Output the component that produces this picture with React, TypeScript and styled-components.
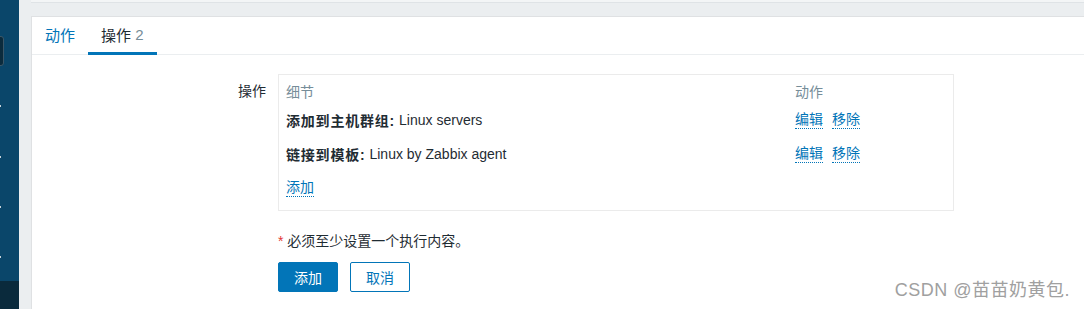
import { FC } from 'react';
import styled, { createGlobalStyle } from 'styled-components';

const GlobalStyle = createGlobalStyle`
  html, body {
    margin: 0;
    padding: 0;
    background: #ebeef0;
    overflow: hidden;
  }
  body {
    font-family: "Liberation Sans", Arial, "Noto Sans CJK SC", sans-serif;
    font-size: 14px;
    color: #1f2c33;
  }
`;

interface IOperation {
  label: string;
  value: string;
}

const operations: IOperation[] = [
  { label: '添加到主机群组', value: 'Linux servers' },
  { label: '链接到模板', value: 'Linux by Zabbix agent' },
];

/**
 * Renders the action operations tab.
 */
const App: FC = () => (
  <>
    <GlobalStyle />
    <SPage>
      <SSidebar>
        <SSearch />
        <SDot $top={105} />
        <SDot $top={156} />
        <SDot $top={206} />
        <SDot $top={256} />
        <SSidebarFooter />
      </SSidebar>

      <SMain>
        <STopLine />
        <SPanel>
          <STabs>
            <STab>动作</STab>
            <STab $active>
              操作 <SCount>2</SCount>
            </STab>
          </STabs>

          <SForm>
            <SLabel>操作</SLabel>
            <STable>
              <SHead>细节</SHead>
              <SHead>动作</SHead>

              {operations.map((op) => (
                <SRowFrag key={op.label}>
                  <SCell>
                    <b>{op.label}:</b> {op.value}
                  </SCell>
                  <SCell>
                    <SActions>
                      <SLink>编辑</SLink>
                      <SLink>移除</SLink>
                    </SActions>
                  </SCell>
                </SRowFrag>
              ))}

              <SCell>
                <SLink>添加</SLink>
              </SCell>
            </STable>

            <span />
            <SHint>
              <SAsterisk>*</SAsterisk> 必须至少设置一个执行内容。
            </SHint>

            <span />
            <SButtons>
              <SButton $primary>添加</SButton>
              <SButton>取消</SButton>
            </SButtons>
          </SForm>
        </SPanel>
      </SMain>

      <SWatermark>CSDN @苗苗奶黄包.</SWatermark>
    </SPage>
  </>
);

export default App;

const SPage = styled.div`
  position: relative;
  display: flex;
  width: 1084px;
  height: 309px;
  overflow: hidden;
`;

const SSidebar = styled.div`
  position: relative;
  flex: 0 0 19px;
  background: #0a466a;
  display: flex;
  flex-direction: column;
  justify-content: flex-end;
`;

const SSearch = styled.div`
  position: absolute;
  left: -4px;
  top: 36px;
  width: 6px;
  height: 28px;
  border: 1px solid #3b5768;
  border-radius: 3px;
  background: #0b2b3d;
`;

const SDot = styled.div<{ $top: number }>`
  position: absolute;
  left: 0;
  top: ${(p) => p.$top}px;
  width: 1px;
  height: 2px;
  background: #c7d2d9;
`;

const SSidebarFooter = styled.div`
  height: 28px;
  background: #0a2a3c;
`;

const SMain = styled.div`
  flex: 1;
  display: flex;
  flex-direction: column;
  padding-left: 12px;
`;

const STopLine = styled.div`
  height: 16px;
  border-top: 2px solid #f3f5f6;
  box-sizing: border-box;
  box-shadow: inset 0 1px 0 #dfe3e6;
`;

const SPanel = styled.div`
  flex: 1;
  background: #fff;
  border-top: 1px solid #dfe1e3;
  border-left: 1px solid #dfe1e3;
`;

const STabs = styled.div`
  display: flex;
  height: 37px;
  border-bottom: 1px solid #ebeef0;
`;

const STab = styled.div<{ $active?: boolean }>`
  display: flex;
  align-items: center;
  padding: 0 13px 1px 13px;
  font-size: 15px;
  color: ${(p) => (p.$active ? '#1f2c33' : '#0275b8')};
  border-bottom: 3px solid ${(p) => (p.$active ? '#0275b8' : 'transparent')};
  margin-bottom: -1px;
  white-space: pre;
`;

const SCount = styled.span`
  color: #768d99;
`;

const SForm = styled.div`
  display: grid;
  grid-template-columns: 234px 676px;
  column-gap: 12px;
  padding-top: 19px;
`;

const SLabel = styled.div`
  text-align: right;
  padding-top: 6px;
`;

const STable = styled.div`
  display: grid;
  grid-template-columns: 509px 1fr;
  grid-auto-rows: 34px;
  grid-template-rows: 25px;
  padding: 3px 7px 5px;
  border: 1px solid #ebebeb;
`;

const SRowFrag = styled.div`
  display: contents;
`;

const SHead = styled.div`
  display: flex;
  align-items: center;
  color: #768d99;
`;

const SCell = styled.div`
  display: flex;
  align-items: center;

  b {
    font-weight: bold;
    letter-spacing: 0.8px;
    margin-right: 4px;
  }
`;

const SActions = styled.div`
  display: flex;
  gap: 9px;
`;

const SLink = styled.span`
  color: #0275b8;
  border-bottom: 1px dotted #0275b8;
  line-height: 17px;
  cursor: pointer;
`;

const SHint = styled.div`
  margin-top: 21px;
  height: 18px;
  line-height: 18px;
`;

const SAsterisk = styled.span`
  color: #e33734;
`;

const SButtons = styled.div`
  display: flex;
  gap: 12px;
  margin-top: 12px;
`;

const SButton = styled.button<{ $primary?: boolean }>`
  width: 60px;
  height: 30px;
  padding: 0;
  font: inherit;
  border-radius: 2px;
  border: 1px solid #0275b8;
  background: ${(p) => (p.$primary ? '#0275b8' : '#fff')};
  color: ${(p) => (p.$primary ? '#fff' : '#0275b8')};
`;

const SWatermark = styled.div`
  position: absolute;
  right: 14px;
  bottom: 8px;
  font-size: 18px;
  color: #a0a0a0;
  letter-spacing: 0.5px;
`;
